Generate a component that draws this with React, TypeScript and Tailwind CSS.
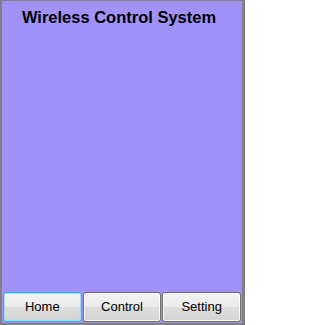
const tabs = ['Home', 'Control', 'Setting']

export default function App() {
  return (
    <div
      className="w-[245px] h-[325px] bg-[#808080] pt-px pl-[2px] pr-[3px] pb-[2px]"
      style={{ fontFamily: '"Liberation Sans", Arial, sans-serif' }}
    >
      <div className="h-full bg-[#a192f9] flex flex-col">
        <h1 className="text-center text-[16.5px] leading-5 font-bold text-black pt-[6px] pr-[6px]">
          Wireless Control System
        </h1>
        <div className="flex-1" />
        <div className="flex gap-px px-px pb-px">
          {tabs.map((t, i) => (
            <button
              key={t}
              className={`flex-1 h-[30px] rounded-[3px] border text-[13px] text-black bg-[linear-gradient(#f3f3f3,#ebebeb_50%,#dddddd_50%,#d4d4d4)] ${
                i === 0
                  ? 'border-[#2bb3e6] shadow-[inset_0_0_0_1px_#a6dff4]'
                  : 'border-[#707070] shadow-[inset_0_0_0_1px_#fbfbfb]'
              }`}
            >
              {t}
            </button>
          ))}
        </div>
      </div>
    </div>
  )
}
